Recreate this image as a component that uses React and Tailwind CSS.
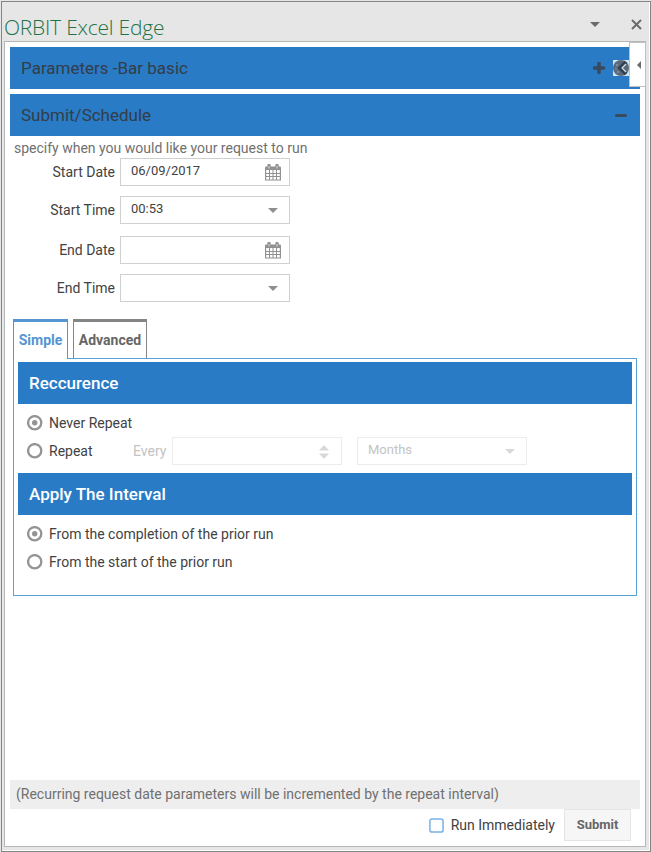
import React from "react";

function Caret({ className = "text-[#8f8f8f]" }) {
  return (
    <svg width="10" height="5" viewBox="0 0 10 5" className={className}>
      <path d="M0 0h10L5 5z" fill="currentColor" />
    </svg>
  );
}

function Calendar() {
  return (
    <svg width="16" height="17" viewBox="0 0 16 17" className="mr-2 text-[#919191]">
      <path d="M0 3.500Q0 2.500 1 2.500h14q1 0 1 1V6H0z" fill="currentColor" />
      <path d="M.6 5v11h14.800V5" fill="none" stroke="currentColor" strokeWidth="1.200" />
      <path d="M4 1.500v3M12 1.500v3" stroke="currentColor" strokeWidth="3.400" strokeLinecap="round" />
      <path d="M4 2v2.500M12 2v2.500" stroke="#fff" strokeWidth="1" opacity=".7" />
      <path d="M4.500 6v10M8 6v10M11.500 6v10M.5 9.500h15M.5 12.500h15" stroke="currentColor" strokeWidth="1" />
    </svg>
  );
}

function Field({ label, value, icon }) {
  return (
    <div className="flex h-7 items-center">
      <span className="w-[110px] pr-[5px] text-right text-[14px] text-[#424242]">{label}</span>
      <div className="flex h-7 w-[170px] items-center justify-between border border-[#d0d0d0] bg-white pl-2.5">
        <span className="pb-[3px] text-[13px] text-[#424242]">{value}</span>
        {icon === "date" ? <Calendar /> : <span className="mr-[11px] pt-px"><Caret /></span>}
      </div>
    </div>
  );
}

function Radio({ checked, children }) {
  return (
    <div className="flex h-7 items-center text-[14px] text-[#424242]">
      <svg width="16" height="16" viewBox="0 0 16 16" className="mr-1.5 text-[#949494]">
        <circle cx="7.700" cy="7.700" r="6.600" fill="none" stroke="currentColor" strokeWidth="2.300" />
        {checked && <circle cx="7.700" cy="7.700" r="2.700" fill="currentColor" />}
      </svg>
      {children}
    </div>
  );
}

function SectionBar({ children }) {
  return (
    <div className="flex h-[42px] items-center bg-[#297bc6] pt-px pl-[11px] text-[17px] font-medium text-white">
      {children}
    </div>
  );
}

export default function App() {
  return (
    <div className="h-[852px] w-[651px] overflow-hidden bg-[#e6e6e6] pt-px pl-px font-['Roboto',sans-serif]">
      <div className="h-[851px] w-[650px] border border-[#858585]">
        <div className="h-[849px] w-[648px] border-r border-b border-white">
          <div className="flex h-[39px] items-end justify-between pl-0.5">
            <h1 className="pb-[2px] font-['Open_Sans',sans-serif] text-[21px] leading-[24px] font-light tracking-[-0.22px] whitespace-nowrap text-[#217346]">ORBIT Excel Edge</h1>
            <div className="flex items-center gap-[31px] pr-[7px] pb-[11px] text-[#6b6b6b]">
              <Caret className="text-[#6b6b6b]" />
              <svg width="11" height="11" viewBox="0 0 11 11">
                <path d="M1 1l9 9M10 1l-9 9" stroke="currentColor" strokeWidth="2" />
              </svg>
            </div>
          </div>

          <div className="relative ml-0.5 flex h-[806px] w-[642px] flex-col border border-[#b5b8b8] bg-white px-[5px] pt-[5px]">
            <div className="flex h-[42px] w-[630px] shrink-0 items-center bg-[#297bc6] pl-[11px] text-[17px] text-[#333d47]">
              <span className="grow pt-px">Parameters -Bar basic</span>
              <svg width="13" height="13" viewBox="0 0 13 13" className="mr-[7px]">
                <path d="M6 1.500v9M1.500 6h9" stroke="#3a4a5c" strokeWidth="3.600" strokeLinecap="round" />
              </svg>
              <svg width="16" height="16" viewBox="0 0 16 16" className="mr-[11px]">
                <path d="M0 0h16v16H0z" fill="#d5e3f0" />
                <circle cx="8" cy="8" r="8" fill="#586a7b" />
                <path d="M13 2L7 8l6 6" fill="none" stroke="#2e4051" strokeWidth="3.500" />
                <path d="M13 4L9 8l4 4" fill="none" stroke="#d5e0e9" strokeWidth="1.200" />
                <circle cx="4" cy="5" r=".8" fill="#a9bac9" />
                <circle cx="3" cy="9" r=".7" fill="#94a8b9" />
                <circle cx="5" cy="12" r=".8" fill="#a9bac9" />
              </svg>
            </div>
            <div className="mt-[5px] flex h-[42px] w-[630px] shrink-0 items-center bg-[#297bc6] pl-[11px] text-[17px] text-[#333d47]">
              <span className="grow pt-px">Submit/Schedule</span>
              <span className="mr-[13px] h-[3px] w-3 rounded-sm bg-[#3a4a5c]" />
            </div>
            <p className="mt-[3px] h-[19px] pl-1 text-[14px] leading-[19px] text-[#707070]">specify when you would like your request to run</p>
            <div className="flex flex-col gap-2.5">
              <Field label="Start Date" value="06/09/2017" icon="date" />
              <Field label="Start Time" value="00:53" />
            </div>
            <div className="mt-3 flex flex-col gap-2.5">
              <Field label="End Date" value="" icon="date" />
              <Field label="End Time" value="" />
            </div>

            <div className="z-10 mt-[17px] ml-[3px] flex h-10 shrink-0 gap-[5px] text-[14px] font-bold">
              <div className="flex h-10 w-[55px] items-center justify-center border-x border-t-[3px] border-[#5595d2] bg-white text-[#5595d2]">Simple</div>
              <div className="flex h-[39px] w-[74px] items-center justify-center border-x border-t-[3px] border-[#858585] pt-px text-[#666]">Advanced</div>
            </div>
            <div className="-mt-px ml-[3px] h-[238px] w-[624px] shrink-0 border border-[#57a3d7] px-1 pt-[3px]">
              <SectionBar>Reccurence</SectionBar>
              <div className="h-[69px] pt-[5px] pl-[9px]">
                <Radio checked>Never Repeat</Radio>
                <div className="flex h-7 items-center text-[#c3c3c3]">
                  <div className="w-[106px]"><Radio>Repeat</Radio></div>
                  <span className="w-[39px] text-[14px]">Every</span>
                  <div className="flex h-7 w-[170px] items-center justify-end border border-[#ececec] pt-px pr-3">
                    <svg width="10" height="14" viewBox="0 0 10 14">
                      <path d="M0 5.500h10L5 0zM0 8.500h10L5 14z" fill="#d9d9d9" />
                    </svg>
                  </div>
                  <div className="ml-[15px] flex h-7 w-[170px] items-center justify-between border border-[#ececec] pr-[11px] pl-2.5 text-[13px]">
                    <span className="pb-[3px]">Months</span>
                    <span><Caret className="text-[#d9d9d9]" /></span>
                  </div>
                </div>
              </div>
              <SectionBar>Apply The Interval</SectionBar>
              <div className="pt-[5px] pl-[9px]">
                <Radio checked>From the completion of the prior run</Radio>
                <Radio>From the start of the prior run</Radio>
              </div>
            </div>

            <div className="mt-[184px] flex h-[29px] w-[630px] shrink-0 items-center bg-[#eee] pl-1.5 text-[14px] text-[#707070]">
              (Recurring request date parameters will be incremented by the repeat interval)
            </div>
            <div className="flex h-8 w-[621px] shrink-0 items-center justify-end text-[14px] text-[#424242]">
              <svg width="15" height="15" viewBox="0 0 15 15" className="mr-[7px]">
                <rect x=".9" y=".9" width="13.200" height="13.200" rx="2.200" fill="none" stroke="#78b2e8" strokeWidth="1.500" />
              </svg>
              <span>Run Immediately</span>
              <button className="ml-[9px] h-8 w-[67px] border border-[#e4e4e4] bg-[#f6f6f6] text-[13px] font-bold text-[#666]">Submit</button>
            </div>

            <div className="absolute top-0 -right-px flex h-[45px] w-[17px] items-center justify-end border border-[#c0c0c0] bg-white pr-[4px]">
              <svg width="4" height="8" viewBox="0 0 4 8"><path d="M4 0v8L0 4z" fill="#6b6b6b" /></svg>
            </div>
          </div>
        </div>
      </div>
    </div>
  );
}
